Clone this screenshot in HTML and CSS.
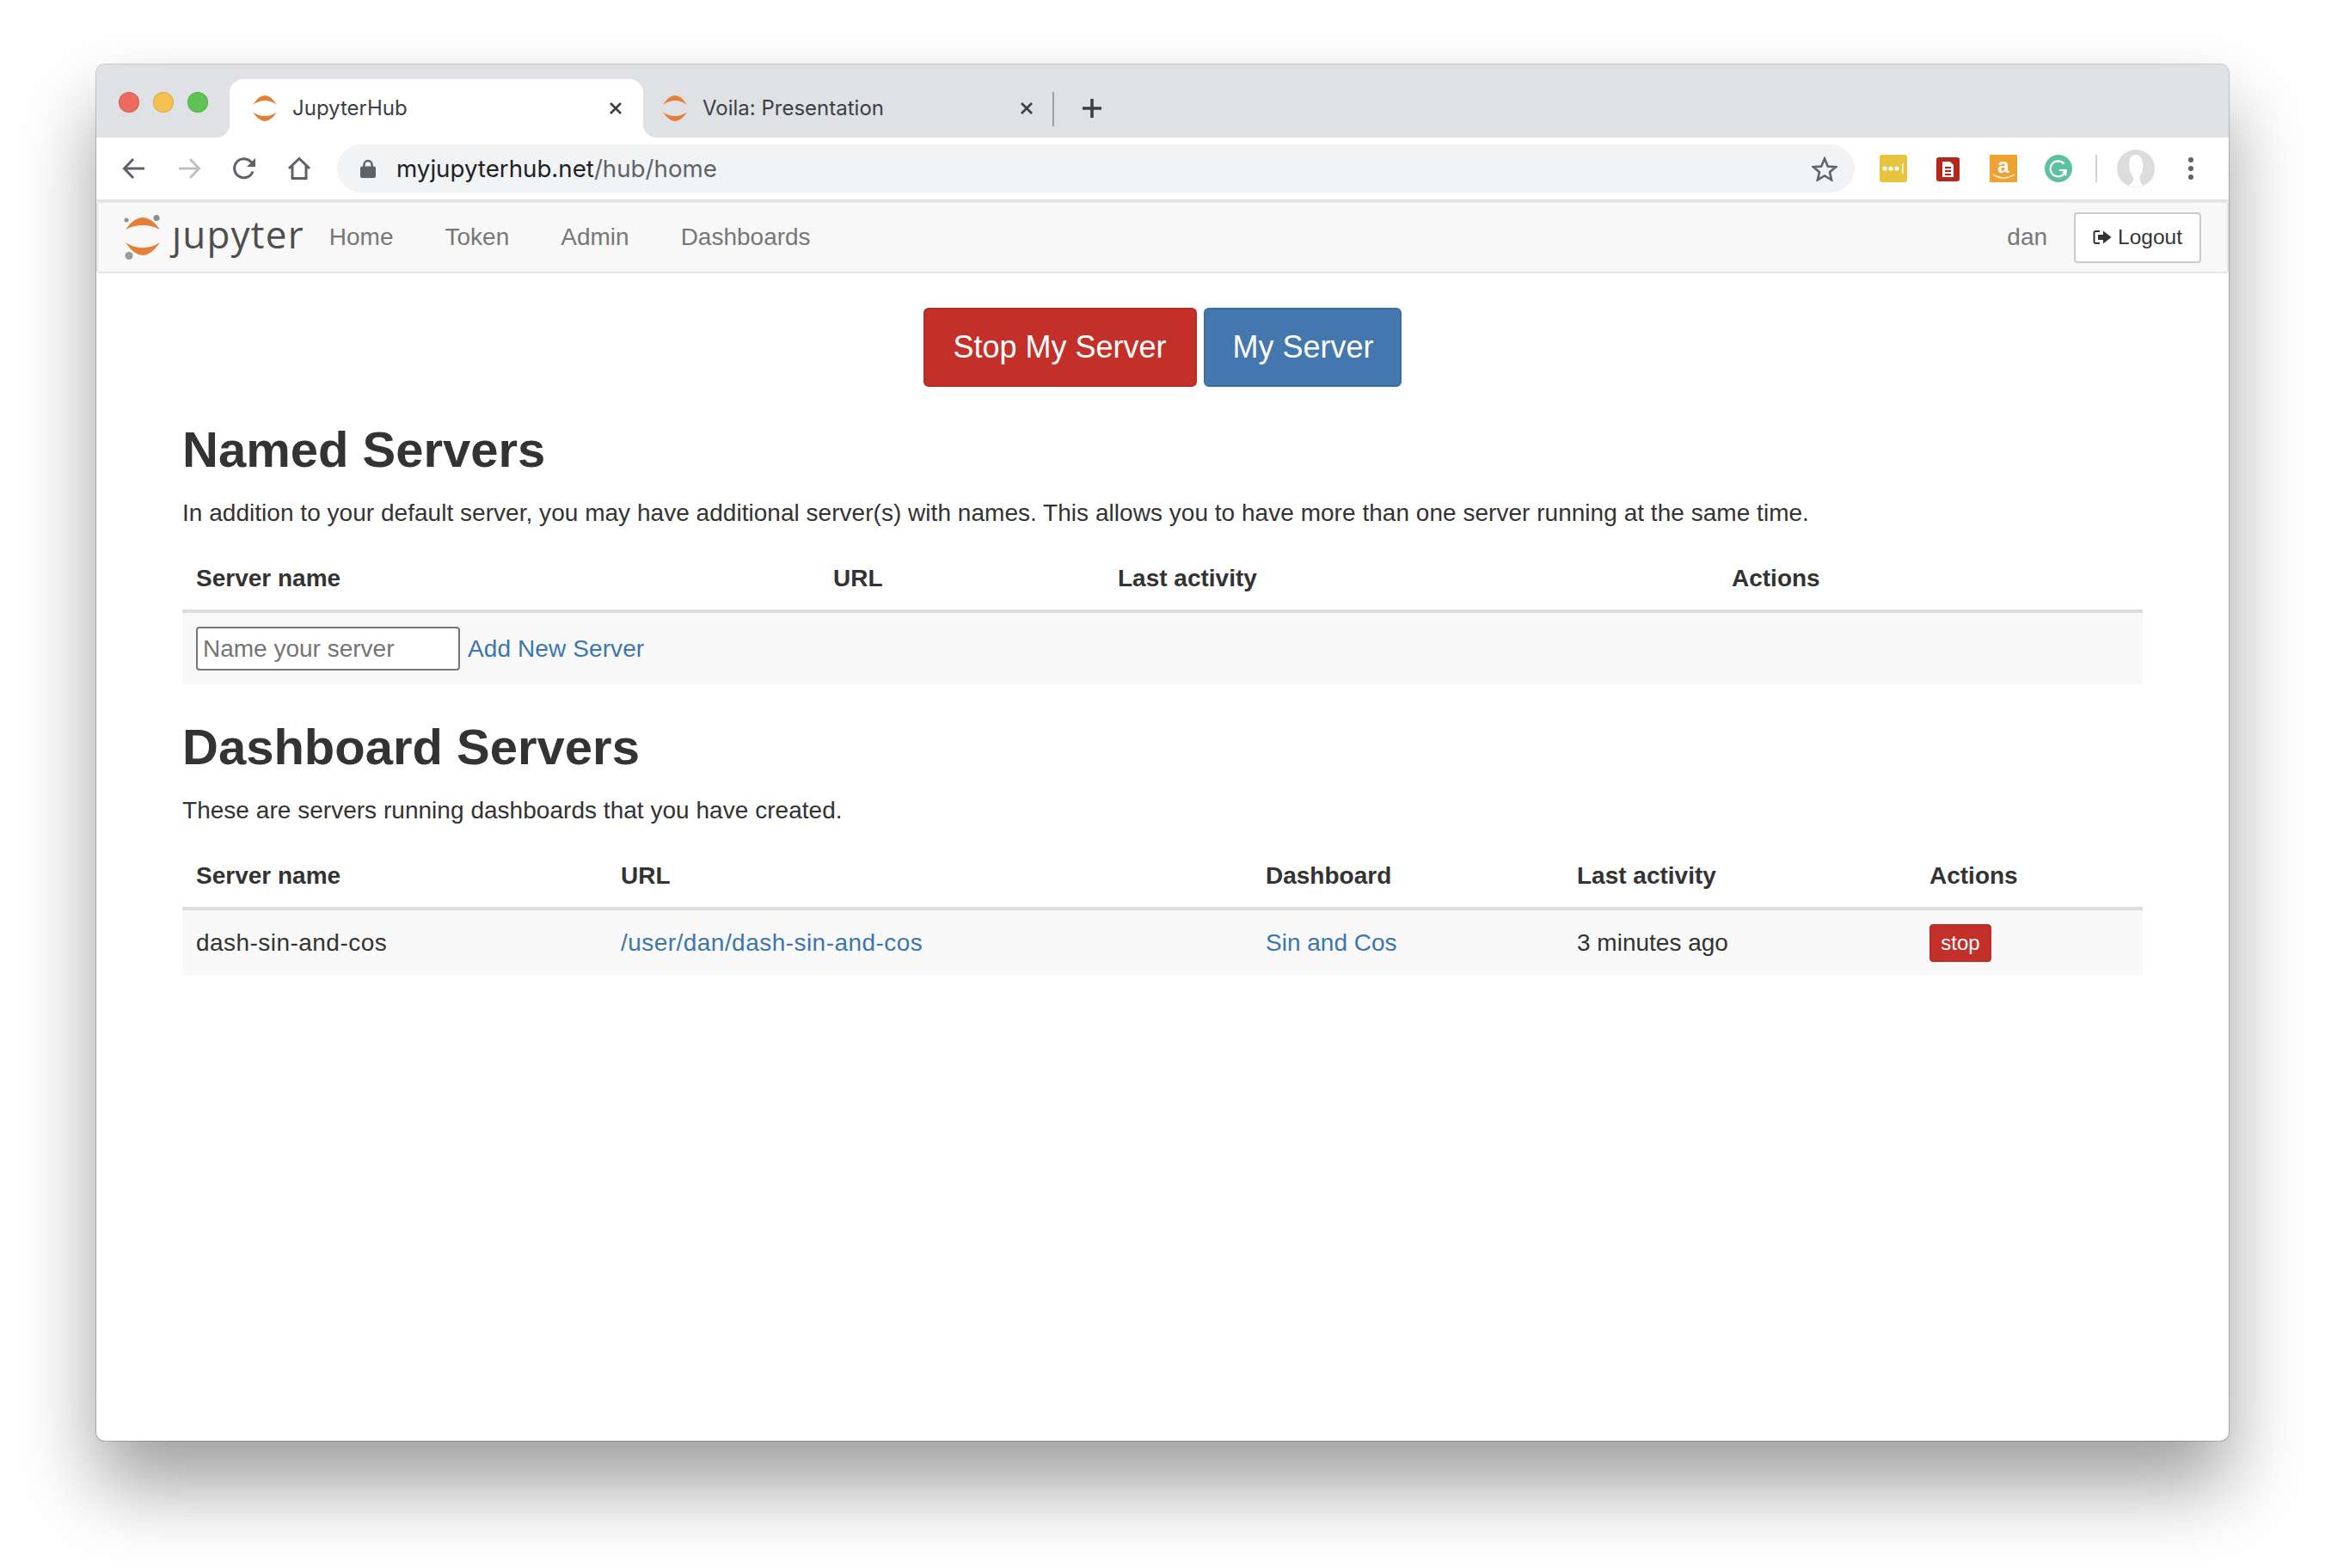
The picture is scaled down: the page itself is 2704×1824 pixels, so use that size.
FILE: index.html
```html
<!DOCTYPE html>
<html lang="en">
<head>
  <meta charset="UTF-8">
  <title>JupyterHub</title>
  <link rel="stylesheet" href="styles.css">
</head>
<body>
<div class="window">

  <div class="tabstrip">
    <div class="lights">
      <span class="light red"></span>
      <span class="light yellow"></span>
      <span class="light green"></span>
    </div>
    <div class="tab active">
      <svg class="favicon" viewBox="0 0 30 30"><path fill="#e67e35" d="M1 11Q15-11 29 11Q15 1 1 11ZM1 19.500Q15 40.500 29 19.500Q15 28.500 1 19.500Z"/></svg>
      <span class="tab-title">JupyterHub</span>
      <svg class="tab-close" viewBox="0 0 16 16"><path d="M2 2L14 14M14 2L2 14"/></svg>
    </div>
    <div class="tab">
      <svg class="favicon" viewBox="0 0 30 30"><path fill="#e67e35" d="M1 11Q15-11 29 11Q15 1 1 11ZM1 19.500Q15 40.500 29 19.500Q15 28.500 1 19.500Z"/></svg>
      <span class="tab-title">Voila: Presentation</span>
      <svg class="tab-close" viewBox="0 0 16 16"><path d="M2 2L14 14M14 2L2 14"/></svg>
    </div>
    <span class="tab-sep"></span>
    <svg class="new-tab" viewBox="0 0 24 24"><path d="M12 1V23M1 12H23"/></svg>
  </div>

  <div class="toolbar">
    <svg class="tool" viewBox="0 0 28 28"><path d="M26 14H3M13 3L2.500 14L13 25"/></svg>
    <svg class="tool off" viewBox="0 0 28 28"><path d="M2 14H25M15 3L25.500 14L15 25"/></svg>
    <svg class="tool" viewBox="0 0 28 28"><path d="M24 17.500A11 11 0 1 1 21.500 6L25 9"/><path class="solid" d="M27 2V12H17Z"/></svg>
    <svg class="tool" viewBox="0 0 28 28"><path d="M2 14L14 2.500L26 14M6 11V25.500H22V11"/></svg>
    <div class="omnibox">
      <svg class="lock" viewBox="0 0 18 22"><path fill="none" stroke="#5f6368" stroke-width="2.500" d="M4.500 10V6.500a4.500 4.500 0 0 1 9 0V10"/><rect y="8.500" width="18" height="13.500" rx="2" fill="#5f6368"/></svg>
      <span class="url">myjupyterhub.net<span class="url-path">/hub/home</span></span>
      <svg class="star" viewBox="0 0 30 29"><path d="M15 2.500L18.800 11.500L28 12.200L21 18.300L23.100 27.300L15 22.500L6.900 27.300L9 18.300L2 12.200L11.200 11.500Z"/></svg>
    </div>
    <div class="extensions">
      <svg class="ext" viewBox="0 0 32 32">
        <rect width="32" height="32" rx="3" fill="#e8c33f"/>
        <circle cx="6" cy="16" r="2.600" fill="#fff"/><circle cx="13" cy="16" r="2.600" fill="#fff"/><circle cx="20" cy="16" r="2.600" fill="#fff"/>
        <rect x="26" y="10" width="1.500" height="12" fill="#fff"/>
      </svg>
      <svg class="ext" viewBox="0 0 32 32">
        <rect x="2" y="3" width="27" height="28" rx="3" fill="#b5261b"/>
        <path fill="#fff" d="M9 8H18L22 12V26H9Z"/>
        <path stroke="#b5261b" stroke-width="2" d="M12 15H19M12 19H19M12 23H19"/>
      </svg>
      <svg class="ext" viewBox="0 0 32 32">
        <rect width="32" height="32" fill="#eda232"/>
        <text class="amazon-a" x="16" y="21" text-anchor="middle">a</text>
        <path fill="none" stroke="#fbe6c4" stroke-width="2" d="M4 23Q16 31 29 23"/>
      </svg>
      <svg class="ext" viewBox="0 0 32 32">
        <circle cx="16" cy="16" r="16" fill="#5bc29d"/>
        <path fill="none" stroke="#fff" stroke-width="2.200" d="M22.500 10.500A9 9 0 1 0 24.500 18H17"/>
        <path fill="#fff" d="M20 20L26 18L25 25Z"/>
      </svg>
      <span class="ext-sep"></span>
      <svg class="avatar" viewBox="0 0 44 44">
        <circle cx="22" cy="22" r="22" fill="#dcdcde"/>
        <path fill="#fff" d="M22 6C14 6 13 16 15 24C16 29 19 30 19 34C19 38 15 41 14 42Q22 45 30 42C27 38 26 34 27 30C30 26 31 20 30 15C29 9 26 6 22 6Z"/>
      </svg>
      <svg class="more" viewBox="0 0 6 26"><circle cx="3" cy="3" r="3"/><circle cx="3" cy="13" r="3"/><circle cx="3" cy="23" r="3"/></svg>
    </div>
  </div>

  <nav class="navbar">
    <a class="brand" href="#">
      <svg class="brand-icon" viewBox="0 0 44 52">
        <path fill="#e67e35" d="M2 17Q22-11 42 17Q22 7 2 17ZM2 32Q22 62 42 32Q22 44.500 2 32Z"/>
        <circle cx="3" cy="6" r="2.500" fill="#8c8c8c"/>
        <circle cx="38" cy="3.500" r="3.500" fill="#8c8c8c"/>
        <circle cx="6" cy="47.500" r="4.500" fill="#9a9a9a"/>
      </svg>
      <span class="brand-word">ȷupyter</span>
    </a>
    <ul class="nav-links">
      <li><a href="#">Home</a></li>
      <li><a href="#">Token</a></li>
      <li><a href="#">Admin</a></li>
      <li><a href="#">Dashboards</a></li>
    </ul>
    <span class="nav-user">dan</span>
    <a class="logout" href="#">
      <svg class="logout-icon" viewBox="0 0 22 18"><path fill="none" stroke="#333" stroke-width="2" d="M8 2H3.500Q1.500 2 1.500 4V14Q1.500 16 3.500 16H8"/><path fill="#333" d="M6 6H12V1.500L21.500 9L12 16.500V12H6Z"/></svg>
      Logout
    </a>
  </nav>

  <main class="content">
    <div class="server-buttons">
      <a class="btn btn-stop" href="#">Stop My Server</a>
      <a class="btn btn-primary" href="#">My Server</a>
    </div>

    <h2>Named Servers</h2>
    <p>In addition to your default server, you may have additional server(s) with names. This allows you to have more than one server running at the same time.</p>
    <table class="named">
      <thead>
        <tr><th>Server name</th><th>URL</th><th>Last activity</th><th>Actions</th></tr>
      </thead>
      <tbody>
        <tr>
          <td colspan="4" class="add-cell"><input type="text" placeholder="Name your server"><a class="add-link" href="#">Add New Server</a></td>
        </tr>
      </tbody>
    </table>

    <h2>Dashboard Servers</h2>
    <p>These are servers running dashboards that you have created.</p>
    <table class="dashboards">
      <thead>
        <tr><th>Server name</th><th>URL</th><th>Dashboard</th><th>Last activity</th><th>Actions</th></tr>
      </thead>
      <tbody>
        <tr>
          <td class="slug">dash-sin-and-cos</td>
          <td class="slug"><a href="#">/user/dan/dash-sin-and-cos</a></td>
          <td><a href="#">Sin and Cos</a></td>
          <td>3 minutes ago</td>
          <td><a class="btn-stop-small" href="#">stop</a></td>
        </tr>
      </tbody>
    </table>
  </main>
</div>
</body>
</html>
```

FILE: styles.css
```css
* { box-sizing: border-box; }

body {
  margin: 0;
  padding: 75px 112px 148px;
  background: #fff;
  font-family: "Liberation Sans", Arial, sans-serif;
  font-size: 28px;
  line-height: 40px;
  color: #333;
}

a { color: #3a76b0; text-decoration: none; }

.window {
  height: 1601px;
  background: #fff;
  border-radius: 10px;
  overflow: hidden;
  box-shadow: 0 52px 90px rgba(0,0,0,0.38), 0 0 0 1px rgba(0,0,0,0.2);
}

/* tabs */
.tabstrip {
  display: flex;
  height: 85px;
  padding-top: 17px;
  background: #dfe1e5;
}
.lights {
  display: flex;
  gap: 16px;
  padding: 15px 25px 0 26px;
}
.light {
  width: 24px;
  height: 24px;
  border-radius: 50%;
  border: 1px solid rgba(0,0,0,0.12);
}
.light.red { background: #ee6a5f; }
.light.yellow { background: #f6c04f; }
.light.green { background: #5fc454; }

.tab {
  display: flex;
  align-items: center;
  width: 476px;
  height: 68px;
  padding: 0 22px 0 22px;
  font-family: Inter, "Liberation Sans", sans-serif;
  font-size: 24px;
  color: #3c4043;
}
.tab.active {
  position: relative;
  width: 481px;
  padding: 0 24px 0 26px;
  background: #fff;
  border-radius: 16px 16px 0 0;
}
.tab.active::before,
.tab.active::after {
  content: "";
  position: absolute;
  bottom: 0;
  width: 16px;
  height: 16px;
}
.tab.active::before {
  left: -16px;
  background: radial-gradient(circle at 0 0, transparent 16px, #fff 16.5px);
}
.tab.active::after {
  right: -16px;
  background: radial-gradient(circle at 100% 0, transparent 16px, #fff 16.5px);
}
.favicon { width: 30px; height: 30px; margin-right: 17px; flex: none; }
.tab-close {
  width: 16px;
  height: 16px;
  margin-left: auto;
  fill: none;
  stroke: #3c4043;
  stroke-width: 2.6;
}
.tab-sep {
  width: 2px;
  height: 40px;
  margin-top: 15px;
  background: #9aa0a6;
}
.new-tab {
  width: 24px;
  height: 24px;
  margin: 22px 0 0 32px;
  fill: none;
  stroke: #3c4043;
  stroke-width: 3.6;
}

/* address bar */
.toolbar {
  display: flex;
  align-items: center;
  height: 74px;
  padding: 0 41px 0 30px;
  gap: 36px;
  background: #fff;
  border-bottom: 2px solid #dee1e6;
}
.tool {
  width: 28px;
  height: 28px;
  flex: none;
  fill: none;
  stroke: #5f6368;
  stroke-width: 3;
}
.tool.off { stroke: #bdc1c6; }
.tool .solid { fill: #5f6368; stroke: none; }
.omnibox {
  display: flex;
  align-items: center;
  flex: 1;
  height: 56px;
  margin: 0 -7px 0 -6px;
  padding: 0 20px 0 27px;
  border-radius: 28px;
  background: #f1f3f4;
}
.lock { width: 18px; height: 22px; margin-right: 24px; }
.url {
  flex: 1;
  font-family: Inter, "Liberation Sans", sans-serif;
  font-size: 27.7px;
  color: #202124;
}
.url-path { color: #5f6368; }
.star {
  width: 30px;
  height: 29px;
  fill: none;
  stroke: #5f6368;
  stroke-width: 2.6;
}
.extensions { display: flex; align-items: center; }
.ext { width: 32px; height: 32px; margin-right: 32px; flex: none; }
.ext:nth-child(4) { margin-right: 27px; }
.amazon-a {
  font-family: "Liberation Sans", sans-serif;
  font-weight: bold;
  font-size: 24px;
  fill: #fff;
}
.ext-sep { width: 2px; height: 32px; background: #d0d2d5; margin-right: 23px; }
.avatar { width: 44px; height: 44px; margin-right: 39px; }
.more { width: 6px; height: 26px; fill: #5f6368; }

/* jupyterhub navbar */
.navbar {
  display: flex;
  align-items: center;
  height: 84px;
  padding: 0 30px 0 30px;
  background: #f8f8f8;
  border: 2px solid #e7e7e7;
  border-radius: 4px;
}
.brand { display: flex; align-items: center; margin-right: 29px; }
.brand-icon { width: 44px; height: 52px; margin-right: 12px; }
.brand-word {
  margin-bottom: 9px;
  font-family: "Open Sans", "Noto Sans", sans-serif;
  font-weight: 400;
  font-size: 44px;
  letter-spacing: 1.2px;
  line-height: 50px;
  color: #4e4e4e;
}
.nav-links {
  display: flex;
  gap: 60px;
  flex: 1;
  margin: 0;
  padding: 0;
  list-style: none;
}
.nav-links a { color: #777; }
.nav-user { color: #777; margin-right: 31px; }
.logout {
  display: flex;
  align-items: center;
  height: 59px;
  padding: 0 20px;
  font-size: 24.5px;
  color: #333;
  background: #fff;
  border: 2px solid #ccc;
  border-radius: 4px;
}
.logout-icon { width: 22px; height: 18px; margin-right: 7px; }

/* page body */
.content { padding: 40px 100px 0; }
.server-buttons {
  display: flex;
  justify-content: center;
  gap: 8px;
  margin-bottom: 41px;
}
.btn {
  display: block;
  padding: 23px 32px;
  font-size: 36px;
  line-height: 42px;
  color: #fff;
  border: 2px solid;
  border-radius: 6px;
}
.btn-stop { background: #c3302a; border-color: #b62c26; padding-right: 33px; }
.btn-primary { background: #4477ae; border-color: #3e6da1; padding-right: 30px; }

h2 {
  margin: 41px 0 22px;
  font-size: 58px;
  font-weight: bold;
  line-height: 64px;
}
p {
  margin: 0 0 20px;
  letter-spacing: 0.03px;
}

table {
  width: 100%;
  border-collapse: collapse;
  table-layout: fixed;
}
th, td { padding: 16px; text-align: left; }
th { font-weight: bold; border-bottom: 4px solid #ddd; }
td { background: #f9f9f9; }
.slug { letter-spacing: 0.46px; }

.named th:nth-child(1) { width: 741px; }
.named th:nth-child(2) { width: 331px; }
.named th:nth-child(3) { width: 714px; }

.dashboards th:nth-child(1) { width: 494px; }
.dashboards th:nth-child(2) { width: 750px; }
.dashboards th:nth-child(3) { width: 362px; }
.dashboards th:nth-child(4) { width: 410px; }

.add-cell input {
  width: 307px;
  height: 51px;
  padding: 0 6px;
  font: inherit;
  color: #333;
  background: #fff;
  border: 2px solid #767676;
  border-radius: 4px;
  vertical-align: middle;
}
.add-cell input::placeholder { color: #757575; }
.add-link { margin-left: 9px; vertical-align: middle; letter-spacing: 0.1px; }

.btn-stop-small {
  display: inline-block;
  width: 72px;
  height: 44px;
  font-size: 24px;
  line-height: 42px;
  text-align: center;
  color: #fff;
  background: #c3302a;
  border: 1px solid #b62c26;
  border-radius: 4px;
  vertical-align: middle;
}
```
